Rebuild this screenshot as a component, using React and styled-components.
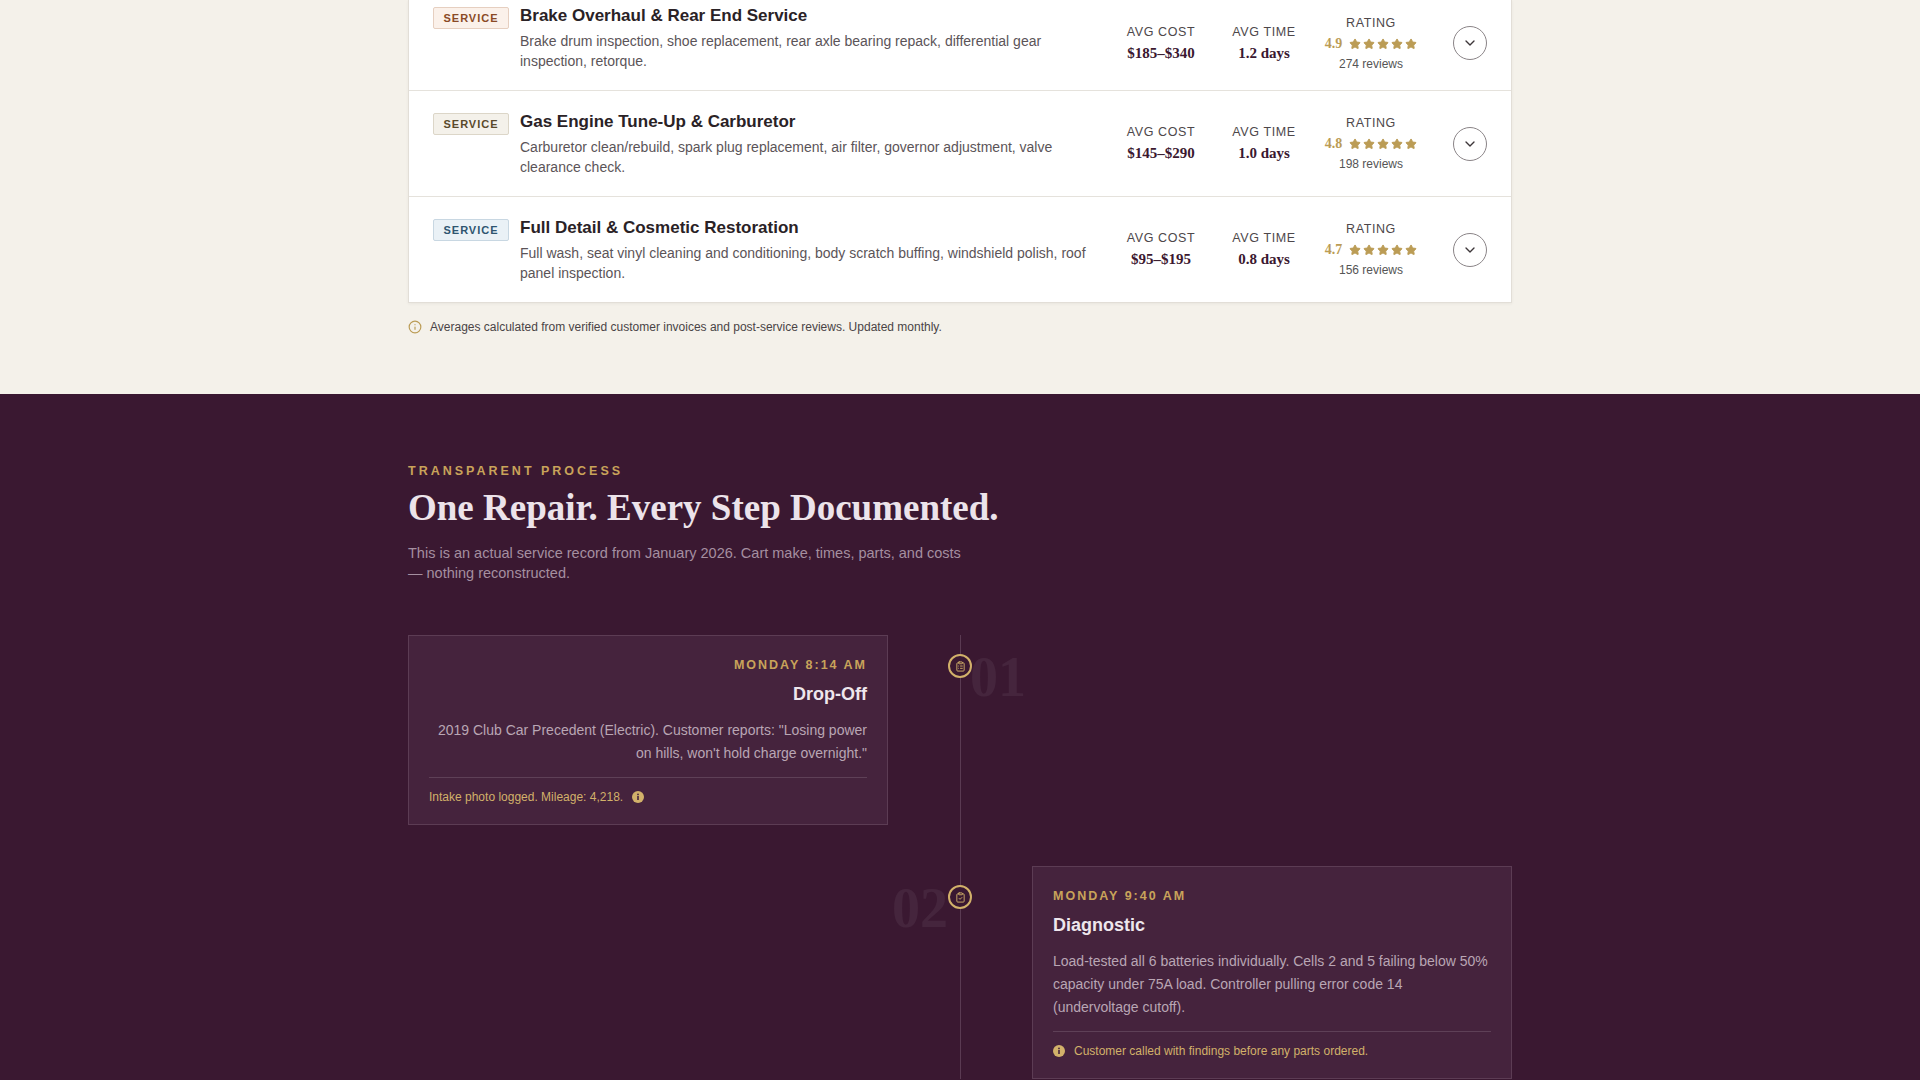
import React from 'react';
import styled, { createGlobalStyle } from 'styled-components';
import { ChevronDown, Star, Info, ClipboardList, ClipboardCheck } from 'lucide-react';

const Global = createGlobalStyle`
  body { margin: 0; font-family: "Liberation Sans", Arial, sans-serif; background: #3a1831; }
`;

const Light = styled.section`
  background: #f4f1ea;
  padding: 0 0 60px;
`;

const Wrap = styled.div`
  width: 1104px;
  margin: 0 auto;
`;

const Card = styled.div`
  background: #fff;
  border: 1px solid #e2ded7;
  border-top: none;
  box-shadow: 0 1px 3px rgba(0, 0, 0, 0.05);
`;

const Row = styled.div`
  display: flex;
  align-items: center;
  height: 106px;
  padding: 0 24px;
  border-top: 1px solid #e5e2dc;
  &:first-child { border-top: none; height: 90px; padding-bottom: 4px; }
  box-sizing: border-box;
`;

const Badge = styled.span`
  flex: none;
  align-self: flex-start;
  margin-top: ${p => (p.first ? '7px' : '22px')};
  width: 76px;
  height: 22px;
  box-sizing: border-box;
  display: flex;
  align-items: center;
  justify-content: center;
  font-size: 11px;
  font-weight: 700;
  letter-spacing: 1px;
  color: ${p => p.fg};
  background: ${p => p.bg};
  border: 1px solid ${p => p.bd};
  border-radius: 2px;
`;

const Body = styled.div`
  flex: none;
  width: 570px;
  margin-left: 11px;
  align-self: flex-start;
  padding-top: ${p => (p.first ? '6px' : '21px')};
`;

const Title = styled.div`
  font-size: 17px;
  font-weight: 700;
  color: #2a2226;
  margin-bottom: 5px;
`;

const Desc = styled.div`
  font-size: 14px;
  line-height: 20px;
  color: #5b5458;
`;

const Stat = styled.div`
  flex: none;
  width: ${p => p.w}px;
  text-align: center;
`;

const Label = styled.div`
  font-size: 12.5px;
  letter-spacing: 0.6px;
  color: #4d474a;
  margin-bottom: 6px;
`;

const Value = styled.div`
  font-family: "Liberation Serif", serif;
  font-weight: 700;
  font-size: 15px;
  color: #3b1830;
`;

const RatingLine = styled.div`
  display: flex;
  align-items: center;
  justify-content: center;
  gap: 7px;
  font-family: "Liberation Serif", serif;
  font-weight: 700;
  font-size: 14px;
  color: #bb9c55;
`;

const Stars = styled.span`
  display: inline-flex;
  gap: 2px;
`;

const Reviews = styled.div`
  font-size: 12px;
  color: #555;
  margin-top: 5px;
`;

const Toggle = styled.div`
  flex: none;
  margin-left: 18px;
  width: 32px;
  height: 32px;
  border: 1px solid #8a8487;
  border-radius: 50%;
  display: flex;
  align-items: center;
  justify-content: center;
  color: #3d3639;
`;

const Note = styled.div`
  display: flex;
  align-items: center;
  gap: 8px;
  margin-top: 17px;
  font-size: 12px;
  color: #4a4446;
`;

const Dark = styled.section`
  background: #3a1831;
  padding: 70px 0 40px;
`;

const Eyebrow = styled.div`
  font-size: 12.5px;
  font-weight: 700;
  letter-spacing: 3px;
  color: #c9a35a;
`;

const Heading = styled.h2`
  margin: 8px 0 14px;
  font-family: "Liberation Serif", serif;
  font-size: 37px;
  color: #ece3ea;
`;

const Sub = styled.p`
  margin: 0;
  width: 570px;
  font-size: 14.5px;
  line-height: 20px;
  color: #a58fa0;
`;

const Timeline = styled.div`
  margin-top: 52px;
  display: grid;
  grid-template-columns: 480px 144px 480px;
  row-gap: 41px;
  background: linear-gradient(#5a3a52, #5a3a52) center / 1px 100% no-repeat;
`;

const StepCard = styled.div`
  grid-column: ${p => (p.side === 'left' ? 1 : 3)};
  background: #45233d;
  border: 1px solid #5c3c54;
  padding: 22px 20px 20px;
  text-align: ${p => (p.side === 'left' ? 'right' : 'left')};
`;

const Time = styled.div`
  font-size: 12.5px;
  font-weight: 700;
  letter-spacing: 2px;
  color: #c9a35a;
`;

const StepTitle = styled.div`
  margin: 12px 0 14px;
  font-size: 18px;
  font-weight: 700;
  color: #eee6ec;
`;

const StepDesc = styled.div`
  font-size: 14px;
  line-height: 23px;
  color: #b9a6b4;
  padding-bottom: 12px;
  border-bottom: 1px solid #5e4057;
`;

const Foot = styled.div`
  display: flex;
  align-items: center;
  gap: 9px;
  justify-content: ${p => (p.side === 'left' ? 'flex-end' : 'flex-start')};
  flex-direction: ${p => (p.side === 'left' ? 'row-reverse' : 'row')};
  margin-top: 12px;
  font-size: 12px;
  color: #d2b16a;
`;

const Center = styled.div`
  grid-column: 2;
  grid-row: ${p => p.row};
  position: relative;
`;

const Marker = styled.div`
  position: absolute;
  top: 19px;
  left: 60px;
  width: 20px;
  height: 20px;
  border: 2px solid #d2b16a;
  border-radius: 50%;
  background: #3a1831;
  display: flex;
  align-items: center;
  justify-content: center;
  color: #d2b16a;
`;

const BigNum = styled.div`
  position: absolute;
  top: 10px;
  ${p => (p.side === 'right' ? 'left: 82px;' : 'right: 84px;')}
  font-family: "Liberation Serif", serif;
  font-weight: 700;
  font-size: 56px;
  color: rgba(255, 255, 255, 0.06);
`;

const services = [
  { title: 'Brake Overhaul & Rear End Service', desc: 'Brake drum inspection, shoe replacement, rear axle bearing repack, differential gear inspection, retorque.', cost: '$185–$340', time: '1.2 days', rating: '4.9', reviews: 274, badge: ['#8a4a25', '#fbf1ea', '#e6cfc0'] },
  { title: 'Gas Engine Tune-Up & Carburetor', desc: 'Carburetor clean/rebuild, spark plug replacement, air filter, governor adjustment, valve clearance check.', cost: '$145–$290', time: '1.0 days', rating: '4.8', reviews: 198, badge: ['#5a4a2a', '#f4f1ea', '#dcd6c8'] },
  { title: 'Full Detail & Cosmetic Restoration', desc: 'Full wash, seat vinyl cleaning and conditioning, body scratch buffing, windshield polish, roof panel inspection.', cost: '$95–$195', time: '0.8 days', rating: '4.7', reviews: 156, badge: ['#2e5570', '#eaf1f6', '#c8d7e2'] },
];

const Dot = ({ size = 12 }) => (
  <svg width={size} height={size} viewBox="0 0 12 12">
    <circle cx="6" cy="6" r="6" fill="#d2b16a" />
    <rect x="5.2" y="5" width="1.6" height="4" fill="#45233d" />
    <circle cx="6" cy="3.4" r="0.9" fill="#45233d" />
  </svg>
);

export default function App() {
  return (
    <>
      <Global />
      <Light>
        <Wrap>
          <Card>
            {services.map((s, i) => (
              <Row key={s.title}>
                <Badge first={i === 0} fg={s.badge[0]} bg={s.badge[1]} bd={s.badge[2]}>SERVICE</Badge>
                <Body first={i === 0}>
                  <Title>{s.title}</Title>
                  <Desc>{s.desc}</Desc>
                </Body>
                <Stat w={120} style={{ marginLeft: 'auto' }}>
                  <Label>AVG COST</Label>
                  <Value>{s.cost}</Value>
                </Stat>
                <Stat w={86}>
                  <Label>AVG TIME</Label>
                  <Value>{s.time}</Value>
                </Stat>
                <Stat w={128}>
                  <Label>RATING</Label>
                  <RatingLine>
                    {s.rating}
                    <Stars>
                      {[0, 1, 2, 3, 4].map(k => (
                        <Star key={k} size={12} fill="#bb9c55" color="#bb9c55" />
                      ))}
                    </Stars>
                  </RatingLine>
                  <Reviews>{s.reviews} reviews</Reviews>
                </Stat>
                <Toggle><ChevronDown size={16} /></Toggle>
              </Row>
            ))}
          </Card>
          <Note>
            <Info size={14} color="#bb9c55" />
            Averages calculated from verified customer invoices and post-service reviews. Updated monthly.
          </Note>
        </Wrap>
      </Light>
      <Dark>
        <Wrap>
          <Eyebrow>TRANSPARENT PROCESS</Eyebrow>
          <Heading>One Repair. Every Step Documented.</Heading>
          <Sub>This is an actual service record from January 2026. Cart make, times, parts, and costs — nothing reconstructed.</Sub>
          <Timeline>
            <StepCard side="left" style={{ gridRow: 1 }}>
              <Time>MONDAY 8:14 AM</Time>
              <StepTitle>Drop-Off</StepTitle>
              <StepDesc>2019 Club Car Precedent (Electric). Customer reports: "Losing power on hills, won't hold charge overnight."</StepDesc>
              <Foot side="left"><Dot />Intake photo logged. Mileage: 4,218.</Foot>
            </StepCard>
            <Center row={1}>
              <Marker><ClipboardList size={11} /></Marker>
              <BigNum side="right">01</BigNum>
            </Center>
            <Center row={2}>
              <Marker><ClipboardCheck size={11} /></Marker>
              <BigNum side="left">02</BigNum>
            </Center>
            <StepCard side="right" style={{ gridRow: 2 }}>
              <Time>MONDAY 9:40 AM</Time>
              <StepTitle>Diagnostic</StepTitle>
              <StepDesc>Load-tested all 6 batteries individually. Cells 2 and 5 failing below 50% capacity under 75A load. Controller pulling error code 14 (undervoltage cutoff).</StepDesc>
              <Foot side="right"><Dot />Customer called with findings before any parts ordered.</Foot>
            </StepCard>
          </Timeline>
        </Wrap>
      </Dark>
    </>
  );
}
